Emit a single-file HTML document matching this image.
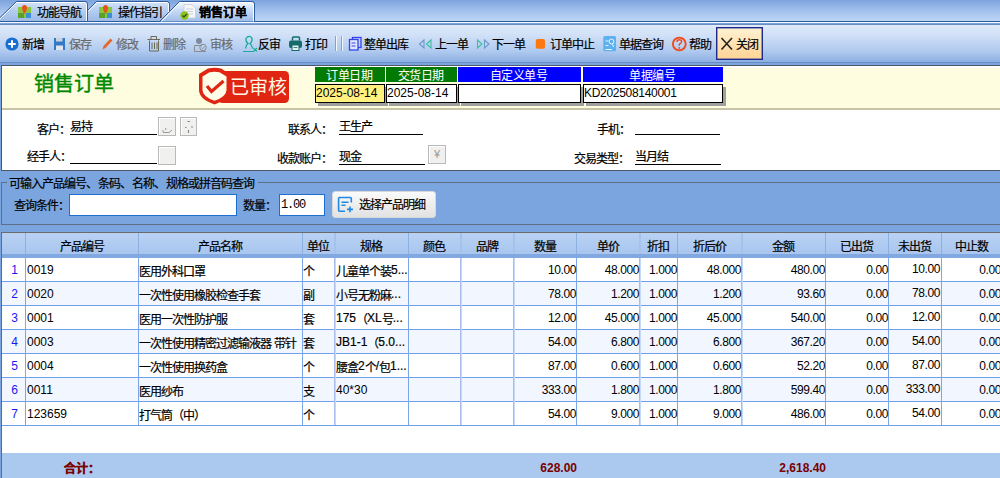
<!DOCTYPE html>
<html lang="zh-CN"><head><meta charset="utf-8"><style>
*{margin:0;padding:0;box-sizing:border-box}
html,body{width:1000px;height:478px;overflow:hidden;background:#7ba5df}
body{font-family:"Liberation Sans",sans-serif;font-size:12px;color:#000;position:relative}
.a{position:absolute;white-space:nowrap;line-height:14px}
.z{-webkit-text-stroke:0.2px currentColor}
.k{position:relative;top:2px;letter-spacing:-1px;-webkit-text-stroke:0.2px currentColor}
.kb{position:relative;top:2px;-webkit-text-stroke:0.2px currentColor}
.kp{position:relative;top:2px;-webkit-text-stroke:0.2px currentColor;letter-spacing:0}
.gray{color:#6a6a6a}
.ul{height:1px;background:#000}
.sbtn{background:#f0f0ee;border:1px solid #b9b9b9;box-shadow:inset 1px 1px 0 #fff}
.gh{height:15px;line-height:15px;color:#fff;text-align:center;letter-spacing:-0.5px}
.db{height:19px;border:1px solid #000;box-shadow:3px 3px 0 #a0a0a0;line-height:17px;padding-left:0}
</style></head><body>
<div class="a" style="left:0;top:0;width:1000px;height:21px;background:linear-gradient(#7da4de,#a2c0ec 50%,#bdd6f6)"></div>
<div class="a" style="left:0;top:21px;width:1000px;height:4px;background:linear-gradient(#2d5a98 0,#2d5a98 1px,#fbfdff 1px,#fbfdff 2px,#7ba3e0 2px,#7ba3e0 3px,#6a8ac0 3px,#6a8ac0 4px)"></div>
<div class="a" style="left:0;top:25px;width:1000px;height:37px;background:linear-gradient(#e0ebfb,#cfdff6 30%,#b0caef 70%,#8db0e3)"></div>
<div class="a" style="left:0;top:62px;width:1000px;height:1px;background:#6b8cc2"></div>
<svg class="a" style="left:0;top:0" width="1000" height="25">
  <defs>
    <linearGradient id="tg" x1="0" y1="0" x2="0" y2="1"><stop offset="0" stop-color="#d3e2f8"/><stop offset="0.45" stop-color="#b5cdf0"/><stop offset="1" stop-color="#9dbbe8"/></linearGradient>
    <linearGradient id="ta" x1="0" y1="0" x2="0" y2="1"><stop offset="0" stop-color="#f4f8fe"/><stop offset="0.4" stop-color="#c9dcf6"/><stop offset="1" stop-color="#9fbde9"/></linearGradient>
  </defs>
  <path d="M-2 20 L16 2 L85 2 Q87 2 87 4 L87 21 L-2 21Z" fill="url(#tg)"/>
  <path d="M0 19 L16.5 2.5 L85 2.5 Q86.5 2.5 86.5 4 L86.5 21" fill="none" stroke="#fff" stroke-width="1"/>
  <path d="M-2 19.5 L16.5 1.5 L85 1.5 Q87.5 1.5 87.5 4 L87.5 21" fill="none" stroke="#2f5d9c" stroke-width="1"/>
  <path d="M88 10 L96.5 2 L167 2 Q169 2 169 4 L169 21 L88 21Z" fill="url(#tg)"/>
  <path d="M88.5 11 L97 2.5 L167 2.5 Q168.5 2.5 168.5 4 L168.5 21" fill="none" stroke="#fff" stroke-width="1"/>
  <path d="M88 10 L96.5 1.5 L167 1.5 Q169.5 1.5 169.5 4 L169.5 21" fill="none" stroke="#2f5d9c" stroke-width="1"/>
  <path d="M160 21.5 L179.5 2 L252 2 Q254 2 254 4 L254 21.5Z" fill="url(#ta)"/>
  <path d="M161.5 21.5 L180 2.5 L252 2.5 Q253.5 2.5 253.5 4 L253.5 21.5" fill="none" stroke="#fff" stroke-width="1"/>
  <path d="M159.5 21.5 L179.5 1.5 L252 1.5 Q254.5 1.5 254.5 4 L254.5 21.5" fill="none" stroke="#2f5d9c" stroke-width="1"/>
  <path d="M0 21.5 H160 M254 21.5 H1000" stroke="#2f5d9c" stroke-width="1"/>
  <g transform="translate(18,5)">
    <rect x="0" y="2" width="13" height="11" fill="#8cc63f"/>
    <rect x="0" y="8" width="6" height="5" fill="#5aa02c"/>
    <rect x="8" y="8" width="5" height="5" fill="#3a8fd8"/>
    <path d="M6.5 0 Q9 0 9 3 Q9 5 6.5 9 Q4 5 4 3 Q4 0 6.5 0Z" fill="#e8501c"/>
  </g>
  <g transform="translate(99,5)">
    <rect x="0" y="2" width="13" height="11" fill="#8cc63f"/>
    <rect x="0" y="8" width="6" height="5" fill="#5aa02c"/>
    <rect x="8" y="8" width="5" height="5" fill="#3a8fd8"/>
    <path d="M6.5 0 Q9 0 9 3 Q9 5 6.5 9 Q4 5 4 3 Q4 0 6.5 0Z" fill="#e8501c"/>
  </g>
  <path d="M184 4.5 H192 L195.5 8 V18 H184Z" fill="#f4f6f8" stroke="#c8ccd2" stroke-width="0.8"/>
  <path d="M186 9H193M186 11.5H193M186 14H193" stroke="#c0c6ce" stroke-width="0.8"/>
  <circle cx="184.5" cy="15.5" r="4.2" fill="#8cc21e"/>
  <path d="M182.5 15.5 L184 17 L186.8 14" fill="none" stroke="#2a4a10" stroke-width="1.2"/>
</svg>
<div class="a" style="left:0;top:22px;width:1000px;height:1px;background:#f4f8ff"></div>
<div class="a z" style="left:37px;top:4px;"><span class="k">功能导航</span></div>
<div class="a z" style="left:118px;top:4px;"><span class="k">操作指引</span></div>
<div class="a z" style="left:199px;top:4px;font-weight:bold"><span class="kb">销售订单</span></div>
<svg class="a" style="left:0;top:30px" width="780" height="30">
  <circle cx="12" cy="14" r="6.6" fill="#1a6ed0"/>
  <path d="M12 10.3V17.7M8.3 14H15.7" stroke="#fff" stroke-width="2"/>
  <rect x="54" y="8" width="11" height="12" fill="#3279c6"/>
  <rect x="56" y="8" width="6.5" height="3.5" fill="#c9d3de"/>
  <rect x="56" y="15.5" width="7" height="4.5" fill="#dfe5ec"/>
  <path d="M102.5 19.5 L103.5 16 L110.5 8.5 L112.5 10.5 L105.5 18 Z" fill="#e2692b"/>
  <path d="M147.5 9.5H160M151 9.5V6.5H156.5V9.5M149.5 10.5V21H158.5V10.5M152 12.5V19M154.5 12.5V19M157 12.5V19" fill="none" stroke="#6c6a55" stroke-width="1"/>
  <circle cx="199" cy="11" r="3" fill="#7d8aa0"/>
  <path d="M194.5 21.5 V15.5 H202 M194.5 21.5 H206" fill="none" stroke="#8a8a8a" stroke-width="1"/>
  <circle cx="203" cy="17.5" r="3.2" fill="none" stroke="#8a8a8a" stroke-width="1"/>
  <path d="M201.5 17.5 L202.7 18.7 L204.8 16.5" fill="none" stroke="#8a8a8a" stroke-width="0.9"/>
  <path d="M245.5 18.5 Q246 15 248 13.5 Q245.5 11.5 246 8.5 Q247.5 6 250 6.5 Q252.5 7.5 252 10.5 Q251.5 12.5 250 13.5 Q252 15 252.5 18.5" fill="none" stroke="#1aa99a" stroke-width="1.3"/>
  <path d="M243 21.5H254M253.5 18L257 21.5M257 18L253.5 21.5" stroke="#1aa99a" stroke-width="1.1"/>
  <path d="M292.5 10.5 V8 Q292.5 7 293.5 7 H298.5 Q299.5 7 299.5 8 V10.5" fill="none" stroke="#156d6b" stroke-width="1.5"/>
  <rect x="289" y="10.5" width="13" height="7.5" rx="2" fill="#156d6b"/>
  <rect x="292" y="15" width="7" height="5.5" fill="#e8f0f0" stroke="#156d6b" stroke-width="1"/>
  <path d="M293.5 17.5H297.5" stroke="#156d6b" stroke-width="0.8"/>
  <rect x="335" y="6" width="1" height="15" fill="#8aa0c4"/>
  <rect x="336" y="6" width="1" height="15" fill="#f4f8ff"/>
  <rect x="341" y="6" width="1" height="15" fill="#8aa0c4"/>
  <rect x="342" y="6" width="1" height="15" fill="#f4f8ff"/>
  <rect x="352.5" y="7.5" width="8.5" height="10" fill="none" stroke="#3443ee" stroke-width="1.3"/>
  <rect x="349.5" y="9.5" width="8.5" height="10.5" fill="#dfe6fb" stroke="#3443ee" stroke-width="1.3"/>
  <path d="M351.5 13H355.5M351.5 16H355.5" stroke="#3443ee" stroke-width="1"/>
  <path d="M424 10 L419.5 14 L424 18 Z" fill="none" stroke="#6a9ac8" stroke-width="1.1"/>
  <path d="M431 10 L426.5 14 L431 18 Z" fill="none" stroke="#3cbf9f" stroke-width="1.1"/>
  <path d="M477.5 10 L482 14 L477.5 18 Z" fill="none" stroke="#3cbf9f" stroke-width="1.1"/>
  <path d="M484.5 10 L489 14 L484.5 18 Z" fill="none" stroke="#6a9ac8" stroke-width="1.1"/>
  <rect x="535.8" y="9" width="9.2" height="9.7" rx="1.8" fill="#fd7812"/>
  <rect x="603.3" y="6" width="12.7" height="15.3" rx="1.5" fill="#5cb1ee"/>
  <path d="M605.5 11H608.5M605.5 15.5H608.5M605.5 19.5H612" stroke="#e8f4ff" stroke-width="1"/>
  <circle cx="611.5" cy="11.5" r="2.4" fill="none" stroke="#e8f4ff" stroke-width="1"/>
  <path d="M612.5 14 L613.5 17" stroke="#e8f4ff" stroke-width="1"/>
  <circle cx="679.3" cy="14" r="6.4" fill="none" stroke="#f04a1a" stroke-width="1.9"/>
  <path d="M677 12 Q677 9.8 679.3 9.8 Q681.6 9.8 681.6 11.8 Q681.6 13.2 679.3 14.2 V15.8" fill="none" stroke="#ee4a1e" stroke-width="1.4"/>
  <circle cx="679.3" cy="18" r="0.9" fill="#ee4a1e"/>
</svg>
<div class="a" style="left:716px;top:27px;width:47px;height:33px;border:1px solid #1c2a8c;box-shadow:inset 0 0 0 0.5px #3a48a0;background:linear-gradient(#fff2d2,#ffd394)"></div>
<svg class="a" style="left:718px;top:35px" width="18" height="18"><path d="M3.5 3L14 14.5M14 3L3.5 14.5" stroke="#222" stroke-width="1.6"/></svg>
<div class="a z" style="left:22px;top:36px;"><span class="k">新增</span></div>
<div class="a z gray" style="left:69px;top:36px;"><span class="k">保存</span></div>
<div class="a z gray" style="left:116px;top:36px;"><span class="k">修改</span></div>
<div class="a z gray" style="left:163px;top:36px;"><span class="k">删除</span></div>
<div class="a z gray" style="left:210px;top:36px;"><span class="k">审核</span></div>
<div class="a z" style="left:258px;top:36px;"><span class="k">反审</span></div>
<div class="a z" style="left:305px;top:36px;"><span class="k">打印</span></div>
<div class="a z" style="left:364px;top:36px;"><span class="k">整单出库</span></div>
<div class="a z" style="left:435px;top:36px;"><span class="k">上一单</span></div>
<div class="a z" style="left:492px;top:36px;"><span class="k">下一单</span></div>
<div class="a z" style="left:550px;top:36px;"><span class="k">订单中止</span></div>
<div class="a z" style="left:619px;top:36px;"><span class="k">单据查询</span></div>
<div class="a z" style="left:689px;top:36px;"><span class="k">帮助</span></div>
<div class="a z" style="left:736px;top:36px;"><span class="k">关闭</span></div>
<div class="a" style="left:1px;top:65px;width:999px;height:106px;background:#fff;border:1px solid #4e5866;border-right:none"></div>
<div class="a" style="left:2px;top:66px;width:998px;height:44px;background:linear-gradient(#fff 0,#fff 2px,#fffde0 2px);border-bottom:2px solid #c6c3a6"></div>
<div class="a " style="left:34px;top:73px;font-size:20px;line-height:22px;color:#008800;-webkit-text-stroke:0.4px #008800">销售订单</div>
<svg class="a" style="left:194px;top:64px" width="100" height="44">
  <rect x="24" y="7" width="71" height="32" rx="4.5" fill="#e02512"/>
  <path d="M5 10 L14 4.5 Q20.5 3 27 4.5 L36 10 V26 Q36 35 20.5 40.5 Q5 35 5 26 Z" fill="#e02512"/>
  <path d="M8.5 12.5 L15.5 8.3 Q20.5 7.3 25.5 8.3 L32.5 12.5 V26 Q32.5 32.5 20.5 36.8 Q8.5 32.5 8.5 26 Z" fill="#fffce8"/>
  <path d="M13 22 L17.5 27.5 L29.5 17" fill="none" stroke="#e02512" stroke-width="3.2"/>
</svg>
<div class="a " style="left:230px;top:77px;font-size:19px;line-height:22px;color:#fff8e6">已审核</div>
<div class="a gh" style="left:315px;top:67px;width:70px;background:#037a03;"><span style="position:relative;top:2px;left:-1px">订单日期</span></div>
<div class="a gh" style="left:386px;top:67px;width:71px;background:#037a03;"><span style="position:relative;top:2px;left:-1px">交货日期</span></div>
<div class="a gh" style="left:458px;top:67px;width:123px;background:#0000ff;"><span style="position:relative;top:2px;left:-1px">自定义单号</span></div>
<div class="a gh" style="left:583px;top:67px;width:140px;background:#0000ff;"><span style="position:relative;top:2px;left:-1px">单据编号</span></div>
<div class="a db" style="left:315px;top:84px;width:70px;background:#fff080">2025-08-14</div>
<div class="a db" style="left:386px;top:84px;width:71px;background:#fff">2025-08-14</div>
<div class="a db" style="left:458px;top:84px;width:123px;background:#fff"></div>
<div class="a db" style="left:583px;top:84px;width:140px;background:#fff"><span style="letter-spacing:-0.3px">KD202508140001</span></div>
<div class="a z" style="left:37px;top:121px;"><span class="k">客户：</span></div>
<div class="a z" style="left:70px;top:118px;"><span class="k">易持</span></div>
<div class="a ul" style="left:70px;top:134px;width:87px"></div>
<div class="a sbtn" style="left:158px;top:117px;width:18px;height:19px"></div>
<div class="a sbtn" style="left:180px;top:117px;width:17px;height:19px"></div>
<svg class="a" style="left:158px;top:117px" width="40" height="19"><path d="M5 15.5 H11 L14 13 M5 13 V15 M7.5 11 L8 13" fill="none" stroke="#9a9a9a" stroke-width="1"/><path d="M29.5 4.5 H32 M27 10.5 H28.5 M33 10 H35 M30.5 13 V16" fill="none" stroke="#8a8a8a" stroke-width="1.2"/></svg>
<div class="a z" style="left:27px;top:148px;"><span class="k">经手人：</span></div>
<div class="a ul" style="left:70px;top:163px;width:87px"></div>
<div class="a sbtn" style="left:158px;top:146px;width:18px;height:19px"></div>
<div class="a z" style="left:288px;top:121px;"><span class="k">联系人：</span></div>
<div class="a z" style="left:339px;top:118px;"><span class="k">王生产</span></div>
<div class="a ul" style="left:339px;top:134px;width:84px"></div>
<div class="a z" style="left:277px;top:150px;"><span class="k">收款账户：</span></div>
<div class="a z" style="left:339px;top:148px;"><span class="k">现金</span></div>
<div class="a ul" style="left:339px;top:164px;width:86px"></div>
<div class="a sbtn" style="left:428px;top:145px;width:18px;height:19px;color:#999;text-align:center;line-height:16px;font-size:11px">¥</div>
<div class="a z" style="left:597px;top:121px;"><span class="k">手机：</span></div>
<div class="a ul" style="left:635px;top:134px;width:85px"></div>
<div class="a z" style="left:574px;top:150px;"><span class="k">交易类型：</span></div>
<div class="a z" style="left:635px;top:148px;"><span class="k">当月结</span></div>
<div class="a ul" style="left:635px;top:164px;width:86px"></div>
<div class="a" style="left:1px;top:182px;width:999px;height:43px;border:1px solid #5f6f86;border-right:none"></div>
<div class="a" style="left:7px;top:176px;width:251px;height:14px;background:#7ba5df"></div>
<div class="a z" style="left:9px;top:175px"><span class="k">可输入产品编号</span><span class="kp">、</span><span class="k">条码</span><span class="kp">、</span><span class="k">名称</span><span class="kp">、</span><span class="k">规格或拼音码查询</span></div>
<div class="a z" style="left:14px;top:197px;"><span class="k">查询条件：</span></div>
<div class="a" style="left:69px;top:194px;width:168px;height:22px;background:#fff;border:1px solid #1f6fd0"></div>
<div class="a z" style="left:243px;top:197px;"><span class="k">数量：</span></div>
<div class="a" style="left:279px;top:194px;width:46px;height:22px;background:#fff;border:1px solid #1f6fd0;font-family:'Liberation Mono',monospace;font-size:12px;letter-spacing:-1.2px;line-height:20px;padding-left:1px">1.00</div>
<div class="a" style="left:332px;top:191px;width:104px;height:27px;border-radius:3px;background:linear-gradient(#fafafa,#e2e2e2);border:1px solid #d8d8d8"></div>
<div class="a z" style="left:359px;top:196px;"><span class="k">选择产品明细</span></div>
<svg class="a" style="left:334px;top:194px" width="24" height="22">
  <path d="M17.3 8.5 V4.5 Q17.3 3.5 16.3 3.5 H5.6 Q4.6 3.5 4.6 4.5 V16.3 Q4.6 17.3 5.6 17.3 H11" fill="none" stroke="#1e88e5" stroke-width="1.6"/>
  <path d="M7.5 8.3 H14.5 M7.5 11.2 H11.5 M13 15.4 H19 M16 12.5 V18.3" stroke="#1e88e5" stroke-width="1.6"/>
</svg>
<div class="a" style="left:1px;top:232px;width:999px;height:246px;background:#fff;border-left:1px solid #6a6a6a;border-top:1px solid #6a6a6a"></div>
<div class="a" style="left:2px;top:233px;width:998px;height:21px;background:linear-gradient(#b9d1f3,#a9c6ef)"></div>
<div class="a" style="left:2px;top:254px;width:998px;height:4px;background:#82a8e1"></div>
<div class="a" style="left:25px;top:233px;width:1px;height:21px;background:#8eb0e0"></div>
<div class="a z" style="left:25px;width:113px;top:238px;text-align:center"><span class="k">产品编号</span></div>
<div class="a" style="left:138px;top:233px;width:1px;height:21px;background:#8eb0e0"></div>
<div class="a z" style="left:138px;width:164px;top:238px;text-align:center"><span class="k">产品名称</span></div>
<div class="a" style="left:302px;top:233px;width:1px;height:21px;background:#8eb0e0"></div>
<div class="a z" style="left:302px;width:32px;top:238px;text-align:center"><span class="k">单位</span></div>
<div class="a" style="left:334px;top:233px;width:2px;height:21px;background:#a6c2ec"></div>
<div class="a z" style="left:334px;width:74px;top:238px;text-align:center"><span class="k">规格</span></div>
<div class="a" style="left:408px;top:233px;width:1px;height:21px;background:#8eb0e0"></div>
<div class="a z" style="left:408px;width:52px;top:238px;text-align:center"><span class="k">颜色</span></div>
<div class="a" style="left:460px;top:233px;width:2px;height:21px;background:#a6c2ec"></div>
<div class="a z" style="left:460px;width:53px;top:238px;text-align:center"><span class="k">品牌</span></div>
<div class="a" style="left:513px;top:233px;width:2px;height:21px;background:#a6c2ec"></div>
<div class="a z" style="left:513px;width:63px;top:238px;text-align:center"><span class="k">数量</span></div>
<div class="a" style="left:576px;top:233px;width:1px;height:21px;background:#8eb0e0"></div>
<div class="a z" style="left:576px;width:63px;top:238px;text-align:center"><span class="k">单价</span></div>
<div class="a" style="left:639px;top:233px;width:2px;height:21px;background:#a6c2ec"></div>
<div class="a z" style="left:639px;width:38px;top:238px;text-align:center"><span class="k">折扣</span></div>
<div class="a" style="left:677px;top:233px;width:1px;height:21px;background:#8eb0e0"></div>
<div class="a z" style="left:677px;width:64px;top:238px;text-align:center"><span class="k">折后价</span></div>
<div class="a" style="left:741px;top:233px;width:2px;height:21px;background:#a6c2ec"></div>
<div class="a z" style="left:741px;width:84px;top:238px;text-align:center"><span class="k">金额</span></div>
<div class="a" style="left:825px;top:233px;width:1px;height:21px;background:#8eb0e0"></div>
<div class="a z" style="left:825px;width:63px;top:238px;text-align:center"><span class="k">已出货</span></div>
<div class="a" style="left:888px;top:233px;width:1px;height:21px;background:#8eb0e0"></div>
<div class="a z" style="left:888px;width:53px;top:238px;text-align:center"><span class="k">未出货</span></div>
<div class="a" style="left:941px;top:233px;width:1px;height:21px;background:#8eb0e0"></div>
<div class="a z" style="left:941px;width:60px;top:238px;text-align:center"><span class="k">中止数</span></div>
<div class="a" style="left:2px;top:281px;width:998px;height:1px;background:#6d9fea"></div>
<div class="a" style="left:2px;top:282px;width:998px;height:23px;background:#f2f7ff"></div>
<div class="a" style="left:2px;top:305px;width:998px;height:1px;background:#6d9fea"></div>
<div class="a" style="left:2px;top:329px;width:998px;height:1px;background:#6d9fea"></div>
<div class="a" style="left:2px;top:330px;width:998px;height:23px;background:#f2f7ff"></div>
<div class="a" style="left:2px;top:353px;width:998px;height:1px;background:#6d9fea"></div>
<div class="a" style="left:2px;top:377px;width:998px;height:1px;background:#6d9fea"></div>
<div class="a" style="left:2px;top:378px;width:998px;height:23px;background:#f2f7ff"></div>
<div class="a" style="left:2px;top:401px;width:998px;height:1px;background:#6d9fea"></div>
<div class="a" style="left:2px;top:425px;width:998px;height:1px;background:#6d9fea"></div>
<div class="a" style="left:25px;top:258px;width:1px;height:167px;background:#7ba6e8"></div>
<div class="a" style="left:138px;top:258px;width:1px;height:167px;background:#7ba6e8"></div>
<div class="a" style="left:302px;top:258px;width:1px;height:167px;background:#7ba6e8"></div>
<div class="a" style="left:334px;top:258px;width:2px;height:167px;background:linear-gradient(90deg,#a9bdec 50%,#c2d9f8 50%)"></div>
<div class="a" style="left:408px;top:258px;width:1px;height:167px;background:#7ba6e8"></div>
<div class="a" style="left:460px;top:258px;width:2px;height:167px;background:linear-gradient(90deg,#a9bdec 50%,#c2d9f8 50%)"></div>
<div class="a" style="left:513px;top:258px;width:2px;height:167px;background:linear-gradient(90deg,#a9bdec 50%,#c2d9f8 50%)"></div>
<div class="a" style="left:576px;top:258px;width:1px;height:167px;background:#7ba6e8"></div>
<div class="a" style="left:639px;top:258px;width:2px;height:167px;background:linear-gradient(90deg,#a9bdec 50%,#c2d9f8 50%)"></div>
<div class="a" style="left:677px;top:258px;width:1px;height:167px;background:#7ba6e8"></div>
<div class="a" style="left:741px;top:258px;width:2px;height:167px;background:linear-gradient(90deg,#a9bdec 50%,#c2d9f8 50%)"></div>
<div class="a" style="left:825px;top:258px;width:1px;height:167px;background:#7ba6e8"></div>
<div class="a" style="left:888px;top:258px;width:1px;height:167px;background:#7ba6e8"></div>
<div class="a" style="left:941px;top:258px;width:1px;height:167px;background:#7ba6e8"></div>
<div class="a" style="left:3px;top:263px;width:23px;text-align:center;color:#1818f0">1</div>
<div class="a" style="left:27px;top:263px;width:111px;overflow:hidden">0019</div>
<div class="a z" style="left:139px;top:263px;width:163px;overflow:hidden"><span class="k">医用外科口罩</span></div>
<div class="a z" style="left:303px;top:263px;width:31px;overflow:hidden"><span class="k">个</span></div>
<div class="a z" style="left:336px;top:263px;width:72px;overflow:hidden"><span class="k">儿童单个装</span>5...</div>
<div class="a" style="left:514px;top:263px;width:62px;text-align:right;padding-right:0px;letter-spacing:-0.4px">10.00</div>
<div class="a" style="left:577px;top:263px;width:62px;text-align:right;padding-right:0px;letter-spacing:-0.4px">48.000</div>
<div class="a" style="left:640px;top:263px;width:37px;text-align:right;padding-right:0px;letter-spacing:-0.4px">1.000</div>
<div class="a" style="left:678px;top:263px;width:63px;text-align:right;padding-right:0px;letter-spacing:-0.4px">48.000</div>
<div class="a" style="left:742px;top:263px;width:83px;text-align:right;padding-right:0px;letter-spacing:-0.4px">480.00</div>
<div class="a" style="left:826px;top:263px;width:62px;text-align:right;padding-right:0px;letter-spacing:-0.4px">0.00</div>
<div class="a" style="left:889px;top:262px;width:52px;text-align:right;padding-right:1px;letter-spacing:-0.4px">10.00</div>
<div class="a" style="left:942px;top:263px;width:59px;text-align:right;padding-right:0px;letter-spacing:-0.4px">0.00</div>
<div class="a" style="left:3px;top:287px;width:23px;text-align:center;color:#1818f0">2</div>
<div class="a" style="left:27px;top:287px;width:111px;overflow:hidden">0020</div>
<div class="a z" style="left:139px;top:287px;width:163px;overflow:hidden"><span class="k">一次性使用橡胶检查手套</span></div>
<div class="a z" style="left:303px;top:287px;width:31px;overflow:hidden"><span class="k">副</span></div>
<div class="a z" style="left:336px;top:287px;width:72px;overflow:hidden"><span class="k">小号无粉麻</span>...</div>
<div class="a" style="left:514px;top:287px;width:62px;text-align:right;padding-right:0px;letter-spacing:-0.4px">78.00</div>
<div class="a" style="left:577px;top:287px;width:62px;text-align:right;padding-right:0px;letter-spacing:-0.4px">1.200</div>
<div class="a" style="left:640px;top:287px;width:37px;text-align:right;padding-right:0px;letter-spacing:-0.4px">1.000</div>
<div class="a" style="left:678px;top:287px;width:63px;text-align:right;padding-right:0px;letter-spacing:-0.4px">1.200</div>
<div class="a" style="left:742px;top:287px;width:83px;text-align:right;padding-right:0px;letter-spacing:-0.4px">93.60</div>
<div class="a" style="left:826px;top:287px;width:62px;text-align:right;padding-right:0px;letter-spacing:-0.4px">0.00</div>
<div class="a" style="left:889px;top:286px;width:52px;text-align:right;padding-right:1px;letter-spacing:-0.4px">78.00</div>
<div class="a" style="left:942px;top:287px;width:59px;text-align:right;padding-right:0px;letter-spacing:-0.4px">0.00</div>
<div class="a" style="left:3px;top:311px;width:23px;text-align:center;color:#1818f0">3</div>
<div class="a" style="left:27px;top:311px;width:111px;overflow:hidden">0001</div>
<div class="a z" style="left:139px;top:311px;width:163px;overflow:hidden"><span class="k">医用一次性防护服</span></div>
<div class="a z" style="left:303px;top:311px;width:31px;overflow:hidden"><span class="k">套</span></div>
<div class="a z" style="left:336px;top:311px;width:72px;overflow:hidden">175<span class="k">（</span>XL<span class="k">号</span>...</div>
<div class="a" style="left:514px;top:311px;width:62px;text-align:right;padding-right:0px;letter-spacing:-0.4px">12.00</div>
<div class="a" style="left:577px;top:311px;width:62px;text-align:right;padding-right:0px;letter-spacing:-0.4px">45.000</div>
<div class="a" style="left:640px;top:311px;width:37px;text-align:right;padding-right:0px;letter-spacing:-0.4px">1.000</div>
<div class="a" style="left:678px;top:311px;width:63px;text-align:right;padding-right:0px;letter-spacing:-0.4px">45.000</div>
<div class="a" style="left:742px;top:311px;width:83px;text-align:right;padding-right:0px;letter-spacing:-0.4px">540.00</div>
<div class="a" style="left:826px;top:311px;width:62px;text-align:right;padding-right:0px;letter-spacing:-0.4px">0.00</div>
<div class="a" style="left:889px;top:310px;width:52px;text-align:right;padding-right:1px;letter-spacing:-0.4px">12.00</div>
<div class="a" style="left:942px;top:311px;width:59px;text-align:right;padding-right:0px;letter-spacing:-0.4px">0.00</div>
<div class="a" style="left:3px;top:335px;width:23px;text-align:center;color:#1818f0">4</div>
<div class="a" style="left:27px;top:335px;width:111px;overflow:hidden">0003</div>
<div class="a z" style="left:139px;top:335px;width:163px;overflow:hidden"><span class="k">一次性使用精密过滤输液器</span> <span class="k">带针</span></div>
<div class="a z" style="left:303px;top:335px;width:31px;overflow:hidden"><span class="k">套</span></div>
<div class="a z" style="left:336px;top:335px;width:72px;overflow:hidden">JB1-1<span class="k">（</span>5.0...</div>
<div class="a" style="left:514px;top:335px;width:62px;text-align:right;padding-right:0px;letter-spacing:-0.4px">54.00</div>
<div class="a" style="left:577px;top:335px;width:62px;text-align:right;padding-right:0px;letter-spacing:-0.4px">6.800</div>
<div class="a" style="left:640px;top:335px;width:37px;text-align:right;padding-right:0px;letter-spacing:-0.4px">1.000</div>
<div class="a" style="left:678px;top:335px;width:63px;text-align:right;padding-right:0px;letter-spacing:-0.4px">6.800</div>
<div class="a" style="left:742px;top:335px;width:83px;text-align:right;padding-right:0px;letter-spacing:-0.4px">367.20</div>
<div class="a" style="left:826px;top:335px;width:62px;text-align:right;padding-right:0px;letter-spacing:-0.4px">0.00</div>
<div class="a" style="left:889px;top:334px;width:52px;text-align:right;padding-right:1px;letter-spacing:-0.4px">54.00</div>
<div class="a" style="left:942px;top:335px;width:59px;text-align:right;padding-right:0px;letter-spacing:-0.4px">0.00</div>
<div class="a" style="left:3px;top:359px;width:23px;text-align:center;color:#1818f0">5</div>
<div class="a" style="left:27px;top:359px;width:111px;overflow:hidden">0004</div>
<div class="a z" style="left:139px;top:359px;width:163px;overflow:hidden"><span class="k">一次性使用换药盒</span></div>
<div class="a z" style="left:303px;top:359px;width:31px;overflow:hidden"><span class="k">个</span></div>
<div class="a z" style="left:336px;top:359px;width:72px;overflow:hidden"><span class="k">腰盒</span>2<span class="k">个</span>/<span class="k">包</span>1...</div>
<div class="a" style="left:514px;top:359px;width:62px;text-align:right;padding-right:0px;letter-spacing:-0.4px">87.00</div>
<div class="a" style="left:577px;top:359px;width:62px;text-align:right;padding-right:0px;letter-spacing:-0.4px">0.600</div>
<div class="a" style="left:640px;top:359px;width:37px;text-align:right;padding-right:0px;letter-spacing:-0.4px">1.000</div>
<div class="a" style="left:678px;top:359px;width:63px;text-align:right;padding-right:0px;letter-spacing:-0.4px">0.600</div>
<div class="a" style="left:742px;top:359px;width:83px;text-align:right;padding-right:0px;letter-spacing:-0.4px">52.20</div>
<div class="a" style="left:826px;top:359px;width:62px;text-align:right;padding-right:0px;letter-spacing:-0.4px">0.00</div>
<div class="a" style="left:889px;top:358px;width:52px;text-align:right;padding-right:1px;letter-spacing:-0.4px">87.00</div>
<div class="a" style="left:942px;top:359px;width:59px;text-align:right;padding-right:0px;letter-spacing:-0.4px">0.00</div>
<div class="a" style="left:3px;top:383px;width:23px;text-align:center;color:#1818f0">6</div>
<div class="a" style="left:27px;top:383px;width:111px;overflow:hidden">0011</div>
<div class="a z" style="left:139px;top:383px;width:163px;overflow:hidden"><span class="k">医用纱布</span></div>
<div class="a z" style="left:303px;top:383px;width:31px;overflow:hidden"><span class="k">支</span></div>
<div class="a" style="left:336px;top:383px;width:72px;overflow:hidden">40*30</div>
<div class="a" style="left:514px;top:383px;width:62px;text-align:right;padding-right:0px;letter-spacing:-0.4px">333.00</div>
<div class="a" style="left:577px;top:383px;width:62px;text-align:right;padding-right:0px;letter-spacing:-0.4px">1.800</div>
<div class="a" style="left:640px;top:383px;width:37px;text-align:right;padding-right:0px;letter-spacing:-0.4px">1.000</div>
<div class="a" style="left:678px;top:383px;width:63px;text-align:right;padding-right:0px;letter-spacing:-0.4px">1.800</div>
<div class="a" style="left:742px;top:383px;width:83px;text-align:right;padding-right:0px;letter-spacing:-0.4px">599.40</div>
<div class="a" style="left:826px;top:383px;width:62px;text-align:right;padding-right:0px;letter-spacing:-0.4px">0.00</div>
<div class="a" style="left:889px;top:382px;width:52px;text-align:right;padding-right:1px;letter-spacing:-0.4px">333.00</div>
<div class="a" style="left:942px;top:383px;width:59px;text-align:right;padding-right:0px;letter-spacing:-0.4px">0.00</div>
<div class="a" style="left:3px;top:407px;width:23px;text-align:center;color:#1818f0">7</div>
<div class="a" style="left:27px;top:407px;width:111px;overflow:hidden">123659</div>
<div class="a z" style="left:139px;top:407px;width:163px;overflow:hidden"><span class="k">打气筒（中）</span></div>
<div class="a z" style="left:303px;top:407px;width:31px;overflow:hidden"><span class="k">个</span></div>
<div class="a" style="left:514px;top:407px;width:62px;text-align:right;padding-right:0px;letter-spacing:-0.4px">54.00</div>
<div class="a" style="left:577px;top:407px;width:62px;text-align:right;padding-right:0px;letter-spacing:-0.4px">9.000</div>
<div class="a" style="left:640px;top:407px;width:37px;text-align:right;padding-right:0px;letter-spacing:-0.4px">1.000</div>
<div class="a" style="left:678px;top:407px;width:63px;text-align:right;padding-right:0px;letter-spacing:-0.4px">9.000</div>
<div class="a" style="left:742px;top:407px;width:83px;text-align:right;padding-right:0px;letter-spacing:-0.4px">486.00</div>
<div class="a" style="left:826px;top:407px;width:62px;text-align:right;padding-right:0px;letter-spacing:-0.4px">0.00</div>
<div class="a" style="left:889px;top:406px;width:52px;text-align:right;padding-right:1px;letter-spacing:-0.4px">54.00</div>
<div class="a" style="left:942px;top:407px;width:59px;text-align:right;padding-right:0px;letter-spacing:-0.4px">0.00</div>
<div class="a" style="left:2px;top:453px;width:998px;height:25px;background:#abc8ee"></div>
<div class="a z" style="left:64px;top:460px;font-weight:bold;color:#7a0000"><span class="kb">合计：</span></div>
<div class="a" style="left:514px;top:461px;width:63px;text-align:right;font-weight:bold;color:#7a0000">628.00</div>
<div class="a" style="left:742px;top:461px;width:84px;text-align:right;font-weight:bold;color:#7a0000">2,618.40</div>
</body></html>
